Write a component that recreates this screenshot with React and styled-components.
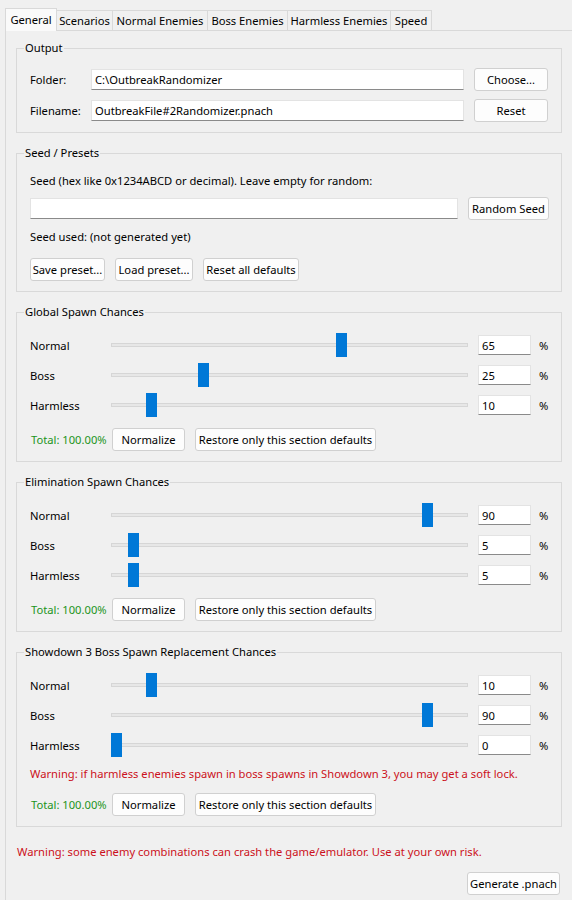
import React from 'react';
import styled, { createGlobalStyle } from 'styled-components';

const GlobalStyle = createGlobalStyle`
  html, body {
    margin: 0;
    padding: 0;
    background: #f0f0f0;
  }
  body {
    font-family: 'Noto Sans', 'Liberation Sans', sans-serif;
    font-size: 11.2px;
    color: #000;
    overflow: hidden;
  }
  * { box-sizing: border-box; }
`;

const Window = styled.div`
  width: 572px;
  height: 900px;
  padding: 8px 0 0 5px;
  overflow: hidden;
`;

const TabBar = styled.div`
  display: flex;
  align-items: flex-end;
  height: 22px;
  position: relative;
  z-index: 1;
`;

const Tab = styled.div`
  width: ${(p) => p.w}px;
  height: ${(p) => (p.active ? 23 : 20)}px;
  margin-left: ${(p) => (p.first ? 0 : -1)}px;
  margin-bottom: ${(p) => (p.active ? -1 : 0)}px;
  border: 1px solid #d9d9d9;
  border-bottom: none;
  background: ${(p) => (p.active ? '#fafafa' : '#f0f0f0')};
  display: flex;
  align-items: center;
  justify-content: center;
  padding-bottom: ${(p) => (p.active ? 2 : 0)}px;
  white-space: nowrap;
  z-index: ${(p) => (p.active ? 2 : 1)};
`;

const Pane = styled.div`
  width: 568px;
  height: 900px;
  border: 1px solid #d9d9d9;
  padding: 9px 10px 0 10px;
  display: flex;
  flex-direction: column;
  gap: 12px;
`;

const Frame = styled.fieldset`
  margin: 0;
  border: 1px solid #d9d9d9;
  padding: 11px 13px 10px 13px;
  min-width: 0;
  display: flex;
  flex-direction: column;
`;

const Legend = styled.legend`
  padding: 0 1px;
  margin-left: -6px;
  line-height: 16px;
`;

const FormRow = styled.div`
  display: flex;
  align-items: center;
  height: 24px;
  margin-top: ${(p) => p.mt || 0}px;
`;

const FieldLabel = styled.div`
  width: 61px;
  flex: none;
`;

const Entry = styled.div`
  width: ${(p) => p.w}px;
  height: ${(p) => p.h || 21}px;
  flex: none;
  background: #fff;
  border: 1px solid #e3e3e3;
  border-bottom-color: #8a8a8a;
  padding: 0 3px;
  display: flex;
  align-items: center;
  white-space: nowrap;
  overflow: hidden;
  margin-left: ${(p) => p.ml || 0}px;
`;

const Button = styled.div`
  width: ${(p) => p.w}px;
  height: 23px;
  flex: none;
  background: #fdfdfd;
  border: 1px solid #d0d0d0;
  border-radius: 3px;
  display: flex;
  align-items: center;
  justify-content: center;
  white-space: nowrap;
  margin-left: ${(p) => p.ml || 0}px;
`;

const TextLine = styled.div`
  line-height: 16px;
  white-space: nowrap;
  margin-top: ${(p) => p.mt || 0}px;
  color: ${(p) => p.color || '#000'};
`;

const Sliders = styled.div`
  display: flex;
  flex-direction: column;
  gap: 6px;
  padding-top: 2px;
`;

const SliderRow = styled.div`
  display: grid;
  grid-template-columns: 81px 357px 63px auto;
  align-items: center;
  height: 24px;
`;

const Track = styled.div`
  position: relative;
  height: 24px;
  display: flex;
  align-items: center;
`;

const TrackLine = styled.div`
  width: 100%;
  height: 4px;
  background: #e7e7e7;
  border: 1px solid #d6d6d6;
`;

const Thumb = styled.div`
  position: absolute;
  top: 0;
  width: 11px;
  height: 24px;
  background: #0078d7;
`;

const Percent = styled.div`
  padding-left: 8px;
`;

const TotalRow = styled.div`
  display: flex;
  align-items: center;
  height: 24px;
  margin-top: 10px;
`;

const TotalLabel = styled.div`
  width: 82px;
  flex: none;
  padding-left: 1px;
  color: #1b941b;
  white-space: nowrap;
`;

const Footer = styled.div`
  display: flex;
  flex-direction: column;
  padding: 5px 2px 0 1px;
`;

const FooterButtonRow = styled.div`
  display: flex;
  justify-content: flex-end;
  margin-top: 12px;
`;

const RED = '#cc1020';

const tabs = [
  { name: 'General', w: 52 },
  { name: 'Scenarios', w: 57 },
  { name: 'Normal Enemies', w: 96 },
  { name: 'Boss Enemies', w: 81 },
  { name: 'Harmless Enemies', w: 104 },
  { name: 'Speed', w: 42 },
];

function Slider({ label, value }) {
  return (
    <SliderRow>
      <div>{label}</div>
      <Track>
        <TrackLine />
        <Thumb style={{ left: `${(value / 100) * 346}px` }} />
      </Track>
      <Entry w={53} h={20} ml={10}>
        {value}
      </Entry>
      <Percent>%</Percent>
    </SliderRow>
  );
}

function SpawnSection({ title, values, warning }) {
  return (
    <Frame>
      <Legend>{title}</Legend>
      <Sliders>
        <Slider label="Normal" value={values[0]} />
        <Slider label="Boss" value={values[1]} />
        <Slider label="Harmless" value={values[2]} />
      </Sliders>
      {warning && (
        <TextLine mt={9} color={RED}>
          {warning}
        </TextLine>
      )}
      <TotalRow>
        <TotalLabel>Total: 100.00%</TotalLabel>
        <Button w={73}>Normalize</Button>
        <Button w={181} ml={10}>
          Restore only this section defaults
        </Button>
      </TotalRow>
    </Frame>
  );
}

export default function App() {
  return (
    <>
      <GlobalStyle />
      <Window>
        <TabBar>
          {tabs.map((t, i) => (
            <Tab key={t.name} w={t.w} first={i === 0} active={i === 0}>
              {t.name}
            </Tab>
          ))}
        </TabBar>
        <Pane>
          <Frame>
            <Legend>Output</Legend>
            <FormRow>
              <FieldLabel>Folder:</FieldLabel>
              <Entry w={373}>C:\OutbreakRandomizer</Entry>
              <Button w={74} ml={10}>
                Choose...
              </Button>
            </FormRow>
            <FormRow mt={7}>
              <FieldLabel>Filename:</FieldLabel>
              <Entry w={373}>OutbreakFile#2Randomizer.pnach</Entry>
              <Button w={74} ml={10}>
                Reset
              </Button>
            </FormRow>
          </Frame>

          <Frame>
            <Legend>Seed / Presets</Legend>
            <TextLine mt={1}>Seed (hex like 0x1234ABCD or decimal). Leave empty for random:</TextLine>
            <FormRow mt={7}>
              <Entry w={428} />
              <Button w={81} ml={10}>
                Random Seed
              </Button>
            </FormRow>
            <TextLine mt={9}>Seed used: (not generated yet)</TextLine>
            <FormRow mt={12}>
              <Button w={75}>Save preset...</Button>
              <Button w={78} ml={10}>
                Load preset...
              </Button>
              <Button w={96} ml={10}>
                Reset all defaults
              </Button>
            </FormRow>
          </Frame>

          <SpawnSection title="Global Spawn Chances" values={[65, 25, 10]} />
          <SpawnSection title="Elimination Spawn Chances" values={[90, 5, 5]} />
          <SpawnSection
            title="Showdown 3 Boss Spawn Replacement Chances"
            values={[10, 90, 0]}
            warning="Warning: if harmless enemies spawn in boss spawns in Showdown 3, you may get a soft lock."
          />

          <Footer>
            <TextLine color={RED}>
              Warning: some enemy combinations can crash the game/emulator. Use at your own risk.
            </TextLine>
            <FooterButtonRow>
              <Button w={93}>Generate .pnach</Button>
            </FooterButtonRow>
          </Footer>
        </Pane>
      </Window>
    </>
  );
}
